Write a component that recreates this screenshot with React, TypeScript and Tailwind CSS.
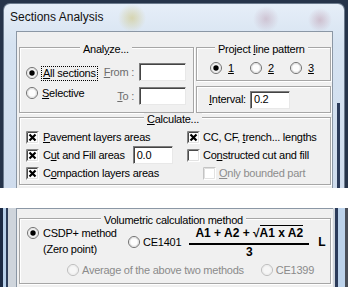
import type { ReactNode } from "react";

function U({ children }: { children: ReactNode }) {
  return <span className="underline underline-offset-[1px]">{children}</span>;
}

function Radio({ on, off }: { on?: boolean; off?: boolean }) {
  return (
    <svg width="12" height="12" viewBox="0 0 12 12" className="shrink-0">
      <circle cx="6" cy="6" r="5.5" fill={off ? "#f6f6f6" : "#fdfdfd"} stroke={off ? "#bcbcbc" : "#6f6f6f"} />
      <circle cx="6" cy="6" r="4.3" fill="none" stroke={off ? "#ececec" : "#dcdcdc"} />
      {on && <circle cx="6" cy="6" r="2.7" fill="#000" />}
    </svg>
  );
}

function Check({ on, off }: { on?: boolean; off?: boolean }) {
  return (
    <svg width="13" height="13" viewBox="0 0 13 13" className="shrink-0">
      <rect x="0" y="0" width="13" height="13" fill="#fff" />
      <path d="M0.5 12.5V0.5H12.5" stroke={off ? "#c4c4c4" : "#858585"} fill="none" />
      <path d="M1.5 11.5V1.5H11.5" stroke={off ? "#dedede" : "#4a4a4a"} fill="none" />
      <path d="M1.5 11.5H11.5V1.5" stroke="#e2e2e2" fill="none" />
      {on && <path d="M3.5 3.5L9.5 9.5M9.5 3.5L3.5 9.5" stroke="#000" strokeWidth="2.2" />}
    </svg>
  );
}

function Edit({ className, value }: { className: string; value?: string }) {
  return (
    <div
      className={`h-[18px] bg-white border border-t-[#7c7c7c] border-l-[#7c7c7c] border-r-[#e8e8e8] border-b-[#e8e8e8] shadow-[inset_1px_1px_0_#444] pl-[3px] flex items-center ${className}`}
    >
      {value}
    </div>
  );
}

function Group({
  label,
  labelPos,
  className,
  children,
}: {
  label: ReactNode;
  labelPos: string;
  className: string;
  children?: ReactNode;
}) {
  return (
    <div className={`relative border border-[#a6a6a6] shadow-[inset_1px_1px_0_#fff,1px_1px_0_#fff] ${className}`}>
      <span className={`absolute top-[-5px] bg-[#f0f0f0] px-[3px] leading-[13px] whitespace-nowrap ${labelPos}`}>
        {label}
      </span>
      {children}
    </div>
  );
}

export default function App() {
  return (
    <div className="w-[348px] h-[287px] overflow-hidden bg-white text-[11px] leading-[13px] tracking-[-0.25px] text-black font-['Liberation_Sans',Arial,sans-serif]">
      {/* top window */}
      <div className="flex h-[188px] bg-[#26344a]">
        <div className="ml-[3px] mt-[3px] w-[342px] flex flex-col rounded-t-[7px] border-l border-t border-r border-[#6c7b8e] bg-[radial-gradient(circle_at_128px_14px,rgba(205,195,120,0.55),transparent_14px),radial-gradient(circle_at_262px_15px,rgba(185,150,170,0.45),transparent_13px),radial-gradient(circle_at_316px_16px,rgba(180,130,150,0.4),transparent_12px),linear-gradient(180deg,#e6eef8,#d6e3f1_40px,#cfdced)]">
          <div className="h-[27px] flex items-center pl-[6px] text-[12px] tracking-normal text-[#111]">Sections Analysis</div>
          <div className="flex flex-1">
            <div className="w-[12px]" />
            <div className="w-[317px] border-l border-t border-r border-[#8b97a5] bg-[#f0f0f0] pl-[2px] pt-[15px]">
              <div className="flex gap-[2px]">
                <Group label={<>Anal<U>y</U>ze...</>} labelPos="left-[60px]" className="w-[175px] h-[66px] flex">
                  <div className="pl-[6px] pt-[15px] flex flex-col">
                    <div className="h-[20px] flex items-center">
                      <Radio on />
                      <span className="ml-[3px] border border-dotted border-black px-[1px] leading-[13px]">
                        <U>A</U>ll sections
                      </span>
                    </div>
                    <div className="h-[20px] flex items-center">
                      <Radio />
                      <span className="ml-[4px]">
                        <U>S</U>elective
                      </span>
                    </div>
                  </div>
                  <div className="ml-auto pr-[7px] pt-[15px] flex flex-col gap-[6px] items-end">
                    <div className="flex items-center gap-[5px]">
                      <span className="text-[#6d6d6d]">
                        <U>F</U>rom :
                      </span>
                      <Edit className="w-[47px]" />
                    </div>
                    <div className="flex items-center gap-[5px]">
                      <span className="text-[#6d6d6d]">
                        <U>T</U>o :
                      </span>
                      <Edit className="w-[47px]" />
                    </div>
                  </div>
                </Group>
                <div className="w-[135px] flex flex-col">
                  <Group label={<>Project <U>l</U>ine pattern</>} labelPos="left-[18px]" className="h-[34px]">
                    <div className="flex pl-[13px] pt-[12px]">
                      {["1", "2", "3"].map((n, i) => (
                        <div key={n} className="w-[41px] h-[16px] flex items-center">
                          <Radio on={i === 0} />
                          <span className="ml-[6px] underline underline-offset-[1px]">{n}</span>
                        </div>
                      ))}
                    </div>
                  </Group>
                  <div className="mt-[5px] h-[27px] relative border border-[#a6a6a6] shadow-[inset_1px_1px_0_#fff,1px_1px_0_#fff] flex items-center pl-[12px]">
                    <span>
                      <U>I</U>nterval:
                    </span>
                    <Edit className="ml-[4px] w-[40px]" value="0.2" />
                  </div>
                </div>
              </div>

              <Group label={<><U>C</U>alculate...</>} labelPos="left-[124px]" className="mt-[4px] w-[312px] h-[68px] flex pt-[10px]">
                <div className="w-[167px] pl-[6px] flex flex-col">
                  <div className="h-[18px] flex items-center">
                    <Check on />
                    <span className="ml-[4px]">
                      <U>P</U>avement layers areas
                    </span>
                  </div>
                  <div className="h-[18px] flex items-center">
                    <Check on />
                    <span className="ml-[4px]">
                      C<U>u</U>t and Fill areas
                    </span>
                    <Edit className="ml-[8px] w-[40px]" value="0.0" />
                  </div>
                  <div className="h-[18px] flex items-center">
                    <Check on />
                    <span className="ml-[4px]">
                      C<U>o</U>mpaction layers areas
                    </span>
                  </div>
                </div>
                <div className="flex flex-col">
                  <div className="h-[18px] flex items-center">
                    <Check on />
                    <span className="ml-[3px]">
                      CC, CF, <U>t</U>rench... lengths
                    </span>
                  </div>
                  <div className="h-[18px] flex items-center">
                    <Check />
                    <span className="ml-[3px]">
                      Co<U>n</U>structed cut and fill
                    </span>
                  </div>
                  <div className="h-[18px] flex items-center pl-[16px] text-[#8d8d8d]">
                    <Check off />
                    <span className="ml-[3px]">
                      <U>O</U>nly bounded part
                    </span>
                  </div>
                </div>
              </Group>
            </div>
            <div className="w-[11px] flex flex-col">
              <div className="h-[72px]" />
              <div className="ml-[4px] w-[3px] flex-1 bg-[#2b3b5a]" />
            </div>
          </div>
        </div>
      </div>

      <div className="h-[20px] bg-white" />

      {/* bottom crop */}
      <div className="flex h-[79px]">
        <div className="w-[3px] bg-[#1c2a44]" />
        <div className="w-[3px] bg-[#b7cfe9]" />
        <div className="w-[2px] bg-[#2d3c58]" />
        <div className="w-[8px] bg-[#cfd5dc]" />
        <div className="w-[317px] border-l border-t border-[#8b97a5] bg-[#f0f0f0] pl-[2px] pt-[9px]">
          <Group label="Volumetric calculation method" labelPos="left-[81px]" className="w-[312px] h-[66px]">
            <div className="flex items-center pt-[6px] pl-[7px]">
              <div className="w-[101px] self-start flex">
                <div className="pt-[2px]">
                  <Radio on />
                </div>
                <div className="ml-[4px] leading-[16px]">
                  CSDP+ method
                  <br />
                  (Zero point)
                </div>
              </div>
              <Radio />
              <span className="ml-[3px]">CE1401</span>
              <div className="ml-[8px] w-[120px] flex flex-col items-center font-bold text-[12px] tracking-normal">
                <div className="leading-[16px] whitespace-nowrap">
                  A1 + A2 + √<span className="border-t-[1.5px] border-black">A1 x A2</span>
                </div>
                <div className="mt-[2px] h-[2px] w-full bg-black" />
                <div className="leading-[14px]">3</div>
              </div>
              <span className="ml-[9px] font-bold text-[12px]">L</span>
            </div>
            <div className="flex items-center h-[16px] mt-[3px] pl-[47px] text-[#8b8b8b]">
              <Radio off />
              <span className="ml-[3px]">Average of the above two methods</span>
              <div className="ml-[17px]">
                <Radio off />
              </div>
              <span className="ml-[3px]">CE1399</span>
            </div>
          </Group>
        </div>
        <div className="w-[2px] bg-[#cfd5dc]" />
        <div className="w-[3px] bg-[#2b3b5a]" />
        <div className="w-[7px] bg-[#bcd2ea]" />
        <div className="w-[3px] bg-[#4a4f58]" />
      </div>
    </div>
  );
}
